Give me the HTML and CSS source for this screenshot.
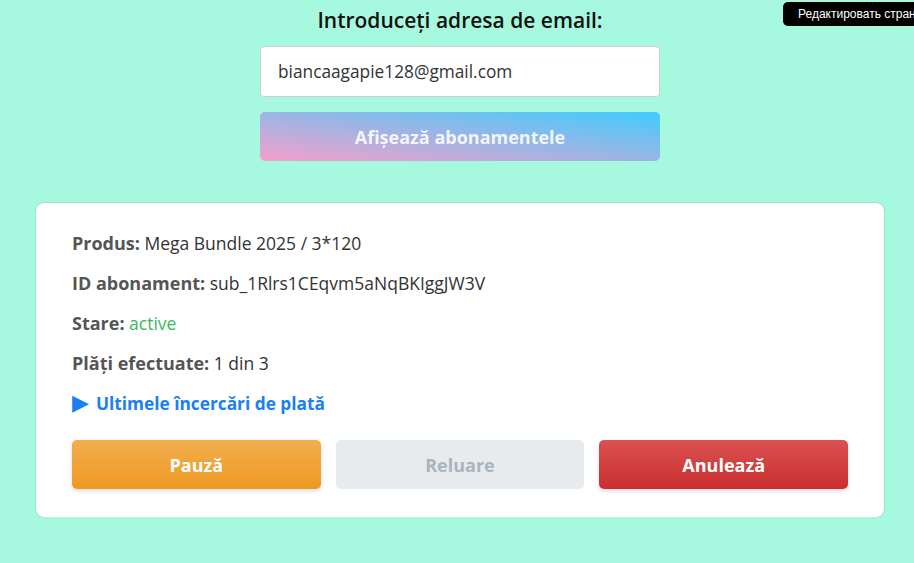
FILE: index.html
```html
<!DOCTYPE html>
<html lang="ro">
<head>
    <meta charset="UTF-8">
    <meta name="viewport" content="width=device-width, initial-scale=1.0">
    <title>Abonamente</title>
    <link rel="stylesheet" href="styles.css">
</head>
<body>

    <div class="edit-tip">Редактировать стран</div>

    <div class="wrapper">
        <h2>Introduceți adresa de email:</h2>
        <div class="search">
            <input type="email" id="email" value="biancaagapie128@gmail.com">
            <button class="show-btn">Afișează abonamentele</button>
        </div>

        <div class="card">
            <p><b>Produs:</b> Mega Bundle 2025 / 3*120</p>
            <p><b>ID abonament:</b> sub_1Rlrs1CEqvm5aNqBKIggJW3V</p>
            <p><b>Stare:</b> <span class="status">active</span></p>
            <p><b>Plăți efectuate:</b> 1 din 3</p>
            <details>
                <summary>Ultimele încercări de plată</summary>
            </details>
            <div class="actions">
                <button class="pause">Pauză</button>
                <button class="resume" disabled>Reluare</button>
                <button class="cancel">Anulează</button>
            </div>
        </div>
    </div>

</body>
</html>
```
FILE: styles.css
```css
body {
    font-family: "Open Sans", sans-serif;
    background: #a6f9df;
    margin: 0;
    color: #333;
}
.wrapper {
    width: 848px;
    margin-left: 36px;
    padding-top: 7px;
}
h2 {
    text-align: center;
    font-size: 21px;
    line-height: 27px;
    font-weight: 600;
    color: #111;
    margin: 0 0 12px;
}
.search {
    width: 400px;
    margin: 0 auto;
}
input {
    display: block;
    box-sizing: border-box;
    width: 100%;
    height: 51px;
    padding: 0 17px;
    border: 1px solid #cfcfcf;
    border-radius: 4px;
    font-family: inherit;
    font-size: 17.3px;
    color: #333;
    outline: none;
    margin-bottom: 15px;
}
button {
    font-family: inherit;
    font-weight: 700;
    font-size: 18px;
    border: none;
    border-radius: 5px;
    color: white;
    cursor: pointer;
}
.show-btn {
    display: block;
    width: 100%;
    height: 49px;
    background: linear-gradient(to top right, #f59fcb, #40ccfe);
    color: rgba(255, 255, 255, 0.88);
}
.card {
    margin-top: 42px;
    background: white;
    border-radius: 8px;
    box-shadow: 0 0 2px rgba(0, 0, 0, 0.25);
    padding: 28px 36px;
}
.card p {
    margin: 0 0 16px;
    font-size: 17.5px;
    line-height: 24px;
    color: #333;
}
.card b {
    font-size: 18px;
    color: #555;
}
.status { color: #3cb85c; }
details {
    margin: 0;
}
summary {
    list-style: none;
    color: #1a7ff0;
    font-weight: 700;
    font-size: 17.3px;
    line-height: 24px;
    cursor: pointer;
}
summary::-webkit-details-marker { display: none; }
summary::before {
    content: "\25B6";
    font-size: 22px;
    margin-right: 7px;
    font-family: "DejaVu Sans", sans-serif;
}
.actions {
    display: flex;
    gap: 15px;
    margin-top: 24px;
}
.actions button {
    flex: 1;
    height: 49px;
    box-shadow: 0 2px 4px rgba(0, 0, 0, 0.15);
}
.pause {
    background: linear-gradient(#f1ae4f, #ee9a22);
}
.resume {
    background: #e7ebee;
    color: #abb4bc;
    box-shadow: none !important;
    cursor: default;
}
.cancel {
    background: linear-gradient(#da5252, #c92e2e);
}
.edit-tip {
    position: absolute;
    top: 2px;
    left: 783px;
    width: 131px;
    box-sizing: border-box;
    overflow: hidden;
    background: black;
    color: white;
    font-family: "Liberation Sans", Arial, sans-serif;
    font-size: 12px;
    line-height: 24px;
    padding-left: 15px;
    border-radius: 5px 0 0 5px;
    white-space: nowrap;
}
```
